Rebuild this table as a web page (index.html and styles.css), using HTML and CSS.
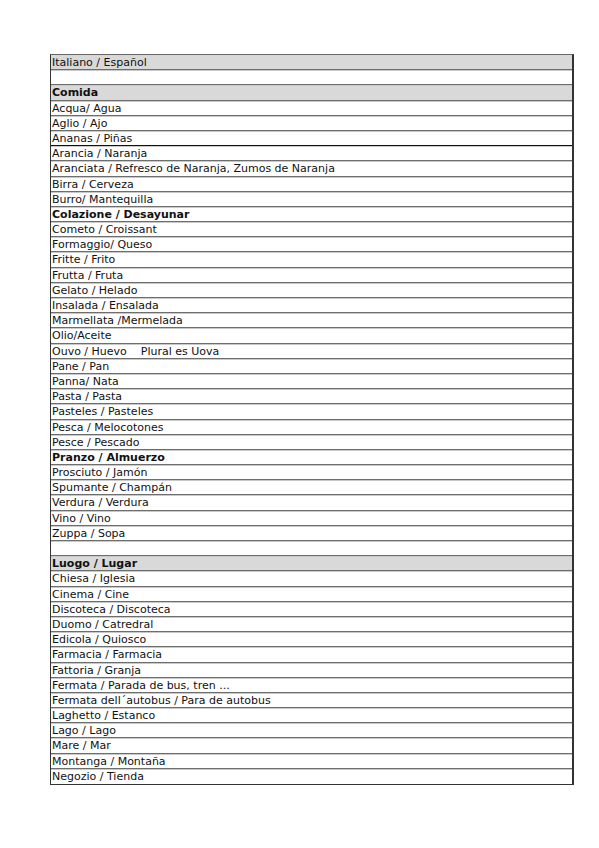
FILE: index.html
```html
<!DOCTYPE html>
<html>
<head>
<meta charset="utf-8">
<link rel="stylesheet" href="styles.css">
</head>
<body>
<div class="sheet">
  <div class="row gray">Italiano / Español</div>
  <div class="row"></div>
  <div class="row gray bold">Comida</div>
  <div class="row">Acqua/ Agua</div>
  <div class="row">Aglio / Ajo</div>
  <div class="row dark">Ananas / Piñas</div>
  <div class="row">Arancia / Naranja</div>
  <div class="row">Aranciata / Refresco de Naranja, Zumos de Naranja</div>
  <div class="row">Birra / Cerveza</div>
  <div class="row">Burro/ Mantequilla</div>
  <div class="row bold">Colazione / Desayunar</div>
  <div class="row">Cometo / Croissant</div>
  <div class="row">Formaggio/ Queso</div>
  <div class="row">Fritte / Frito</div>
  <div class="row">Frutta / Fruta</div>
  <div class="row">Gelato / Helado</div>
  <div class="row">Insalada / Ensalada</div>
  <div class="row">Marmellata /Mermelada</div>
  <div class="row">Olio/Aceite</div>
  <div class="row">Ouvo / Huevo    Plural es Uova</div>
  <div class="row">Pane / Pan</div>
  <div class="row">Panna/ Nata</div>
  <div class="row">Pasta / Pasta</div>
  <div class="row">Pasteles / Pasteles</div>
  <div class="row">Pesca / Melocotones</div>
  <div class="row">Pesce / Pescado</div>
  <div class="row bold">Pranzo / Almuerzo</div>
  <div class="row">Prosciuto / Jamón</div>
  <div class="row">Spumante / Champán</div>
  <div class="row">Verdura / Verdura</div>
  <div class="row">Vino / Vino</div>
  <div class="row">Zuppa / Sopa</div>
  <div class="row"></div>
  <div class="row gray bold">Luogo / Lugar</div>
  <div class="row">Chiesa / Iglesia</div>
  <div class="row">Cinema / Cine</div>
  <div class="row">Discoteca / Discoteca</div>
  <div class="row">Duomo / Catredral</div>
  <div class="row">Edicola / Quiosco</div>
  <div class="row">Farmacia / Farmacia</div>
  <div class="row">Fattoria / Granja</div>
  <div class="row">Fermata / Parada de bus, tren ...</div>
  <div class="row">Fermata dell´autobus / Para de autobus</div>
  <div class="row">Laghetto / Estanco</div>
  <div class="row">Lago / Lago</div>
  <div class="row">Mare / Mar</div>
  <div class="row">Montanga / Montaña</div>
  <div class="row">Negozio / Tienda</div>
</div>
</body>
</html>
```
FILE: styles.css
```css
html, body {
  margin: 0;
  padding: 0;
  background: #ffffff;
}
body {
  padding: 54px 0 0 50px;
  font-family: "DejaVu Sans", sans-serif;
  font-size: 11px;
  color: #111;
}
.sheet {
  width: 521px;
  border-top: 1px solid #666;
  border-left: 1px solid #333;
  border-right: 2px solid #333;
  border-bottom: 1px solid #333;
}
.row {
  box-sizing: border-box;
  height: 15.2px;
  line-height: 15px;
  padding-left: 1px;
  border-bottom: 1px solid #6e6e6e;
  box-shadow: inset 0 1px 0 #c9c9c9;
  white-space: pre;
  overflow: hidden;
}
.row:first-child {
  box-shadow: none;
}
.row:last-child {
  border-bottom: none;
}
.gray {
  background: #d9d9d9;
}
.bold {
  font-weight: bold;
}
.dark {
  border-bottom-color: #111;
}
```
